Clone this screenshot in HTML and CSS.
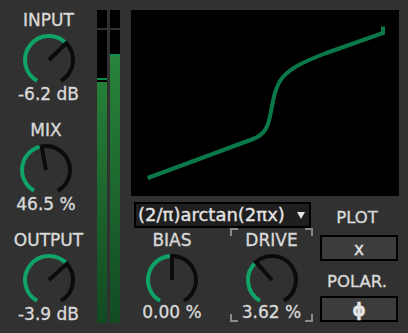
FILE: index.html
```html
<!DOCTYPE html>
<html lang="en">
<head>
    <meta charset="UTF-8">
    <meta name="viewport" content="width=device-width, initial-scale=1.0">
    <title>Waveshaper</title>
    <link rel="stylesheet" href="styles.css">
</head>
<body>

<div class="device">
    <div class="strip">
        <div class="dial">
            <div class="dial-label">INPUT</div>
            <svg class="knob" data-value="0.653"></svg>
            <div class="dial-value">-6.2 dB</div>
        </div>
        <div class="dial dial-mix">
            <div class="dial-label">MIX</div>
            <svg class="knob" data-value="0.465"></svg>
            <div class="dial-value">46.5 %</div>
        </div>
        <div class="dial">
            <div class="dial-label">OUTPUT</div>
            <svg class="knob" data-value="0.66"></svg>
            <div class="dial-value">-3.9 dB</div>
        </div>
    </div>

    <div class="meters">
        <div class="meter">
            <div class="meter-top"></div>
            <div class="meter-main">
                <div class="meter-peak"></div>
                <div class="meter-fill" style="height: 241px"></div>
            </div>
        </div>
        <div class="meter">
            <div class="meter-top"></div>
            <div class="meter-main">
                <div class="meter-fill meter-fill-hot" style="height: 269px"></div>
            </div>
        </div>
    </div>

    <div class="main">
        <div class="plot">
            <svg width="268" height="186" viewBox="0 0 268 186">
                <path class="curve" d="M16.7 168 L122 129 C134 124.5 137 117 139.5 104 C142 91 144 76 152 67 C160 58 172 52 194 43.5 L252 23 V16.5"/>
            </svg>
        </div>

        <div class="lower">
            <div class="lower-left">
                <div class="dropdown">
                    <span>(2/π)arctan(2πx)</span>
                    <span class="caret"></span>
                </div>
                <div class="dial-row">
                    <div class="dial dial-bias">
                        <div class="dial-label">BIAS</div>
                        <svg class="knob" data-value="0.5"></svg>
                        <div class="dial-value">0.00 %</div>
                    </div>
                    <div class="dial dial-drive">
                        <span class="corner corner-tl"></span>
                        <span class="corner corner-tr"></span>
                        <span class="corner corner-bl"></span>
                        <span class="corner corner-br"></span>
                        <div class="dial-label">DRIVE</div>
                        <svg class="knob" data-value="0.36"></svg>
                        <div class="dial-value">3.62 %</div>
                    </div>
                </div>
            </div>

            <div class="lower-right">
                <div class="side-label">PLOT</div>
                <div class="toggle">x</div>
                <div class="side-label side-label-gap">POLAR.</div>
                <div class="toggle toggle-phi">ϕ</div>
            </div>
        </div>
    </div>
</div>

<script>
    // Build the dial arcs from each knob's value (0..1)
    function polar(deg, r) {
        const a = deg * Math.PI / 180;
        return [28 + r * Math.sin(a), 28 - r * Math.cos(a)];
    }

    function arc(from, to, r) {
        const [x1, y1] = polar(from, r);
        const [x2, y2] = polar(to, r);
        const large = to - from > 180 ? 1 : 0;
        return `M${x1} ${y1} A${r} ${r} 0 ${large} 1 ${x2} ${y2}`;
    }

    document.querySelectorAll('.knob').forEach(knob => {
        const angle = -150 + 300 * parseFloat(knob.dataset.value);
        const [px, py] = polar(angle, 26);
        knob.setAttribute('viewBox', '0 0 56 52');
        knob.innerHTML =
            `<path class="knob-track" d="${arc(angle, 150, 24)}"/>` +
            `<path class="knob-level" d="${arc(-150, angle, 24)}"/>` +
            `<line class="knob-pointer" x1="28" y1="28" x2="${px}" y2="${py}"/>`;
    });
</script>

</body>
</html>
```

FILE: styles.css
```css
body {
    margin: 0;
    padding: 0;
    background-color: #313131;
    font-family: "DejaVu Sans", sans-serif;
    color: #d9d9d9;
    -webkit-text-stroke: 0.35px currentColor;
    width: 408px;
    height: 333px;
    overflow: hidden;
}
.device {
    display: flex;
    height: 333px;
}

/* left column of dials */
.strip {
    width: 97px;
    display: flex;
    flex-direction: column;
}
.dial {
    display: flex;
    flex-direction: column;
    align-items: center;
    box-sizing: border-box;
}
.strip .dial {
    height: 110px;
    padding-top: 10px;
}
.strip .dial-mix {
    padding-right: 5px;
}
.dial-label {
    font-size: 17px;
    line-height: 20px;
}
.dial-value {
    font-size: 17px;
    line-height: 20px;
}
.knob {
    width: 56px;
    height: 52px;
    margin-top: 2px;
}
.knob-track {
    fill: none;
    stroke: #0b0b0b;
    stroke-width: 4;
}
.knob-level {
    fill: none;
    stroke: #10a368;
    stroke-width: 4;
}
.knob-pointer {
    stroke: #0b0b0b;
    stroke-width: 4;
}

/* level meters */
.meters {
    width: 23px;
    height: 313px;
    margin-top: 10px;
    display: flex;
    gap: 3px;
}
.meter {
    width: 10px;
    display: flex;
    flex-direction: column;
    gap: 2px;
}
.meter-top {
    height: 18px;
    background-color: #000;
}
.meter-main {
    flex: 1;
    background-color: #000;
    display: flex;
    flex-direction: column;
    justify-content: flex-end;
}
.meter-peak {
    height: 2px;
    margin-bottom: 2px;
    background-color: #0d8a4c;
}
.meter-fill {
    background: linear-gradient(to top, #124a22, #2a8a3c) no-repeat bottom;
    background-size: 100% 293px;
}
.meter-fill-hot {
    box-sizing: border-box;
    border-top: 2px solid #0d8a4c;
}

/* graph + controls */
.main {
    margin-left: 11px;
    width: 268px;
}
.plot {
    width: 268px;
    height: 186px;
    margin-top: 10px;
    background-color: #000;
}
.plot svg {
    display: block;
}
.curve {
    fill: none;
    stroke: #0b7849;
    stroke-width: 4;
}
.lower {
    display: flex;
}
.lower-left {
    width: 184px;
}
.dropdown {
    margin-top: 6px;
    margin-left: 3px;
    width: 177px;
    height: 26px;
    box-sizing: border-box;
    border: 2px solid #000;
    background-color: #1f1f1f;
    padding-left: 2px;
    display: flex;
    align-items: center;
    font-size: 18px;
    line-height: 22px;
    color: #e4e4e4;
}
.caret {
    margin-left: auto;
    margin-right: 4px;
    border-left: 4.5px solid transparent;
    border-right: 4.5px solid transparent;
    border-top: 7px solid #e4e4e4;
}
.dial-row {
    display: flex;
    gap: 18px;
    padding-left: 1px;
}
.dial-row .dial {
    height: 94px;
    padding-top: 2px;
}
.dial-row .dial-value {
    margin-top: -2px;
}
.dial-bias {
    width: 80px;
}
.dial-drive {
    width: 83px;
    position: relative;
}
.corner {
    position: absolute;
    width: 8px;
    height: 8px;
    border-color: #8a8a8a;
    border-style: solid;
    border-width: 0;
    box-sizing: border-box;
}
.corner-tl {
    top: 0;
    left: 0;
    border-top-width: 2px;
    border-left-width: 2px;
}
.corner-tr {
    top: 0;
    right: 0;
    border-top-width: 2px;
    border-right-width: 2px;
}
.corner-bl {
    bottom: 0;
    left: 0;
    border-bottom-width: 2px;
    border-left-width: 2px;
}
.corner-br {
    bottom: 0;
    right: 0;
    border-bottom-width: 2px;
    border-right-width: 2px;
}
.lower-right {
    width: 84px;
    padding-top: 12px;
    display: flex;
    flex-direction: column;
    align-items: center;
}
.side-label {
    font-size: 16.5px;
    line-height: 20px;
}
.side-label-gap {
    margin-top: 11px;
}
.toggle {
    margin-top: 7px;
    margin-left: 4px;
    width: 78px;
    height: 26px;
    box-sizing: border-box;
    border: 2px solid #000;
    background-color: #3c3c3c;
    text-align: center;
    font-size: 17px;
    line-height: 24px;
    color: #e4e4e4;
}
.toggle-phi {
    margin-top: 4px;
    font-weight: bold;
}
```
